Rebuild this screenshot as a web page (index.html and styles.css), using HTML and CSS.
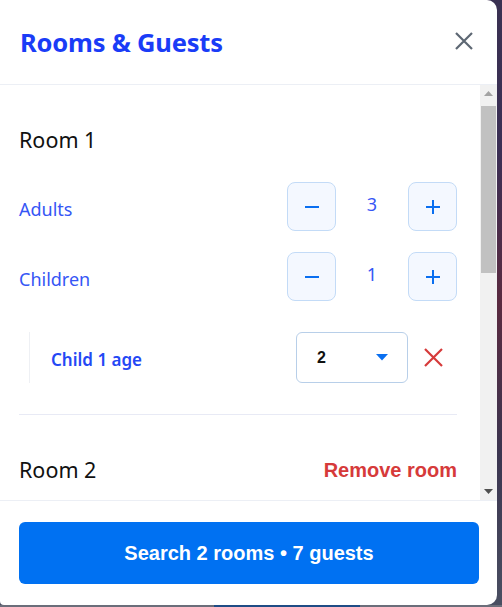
FILE: index.html
```html
<!DOCTYPE html>
<html lang="en">
<head>
<meta charset="utf-8">
<title>Rooms &amp; Guests</title>
<link rel="stylesheet" href="styles.css">
</head>
<body>
<div class="backdrop">
  <div class="modal">
    <header class="modal-header">
      <h1 class="modal-title">Rooms &amp; Guests</h1>
      <button class="close-btn" aria-label="Close">
        <svg width="18" height="18" viewBox="0 0 18 18"><path d="M1 1L17 17M17 1L1 17" stroke="#5d6773" stroke-width="2.2"/></svg>
      </button>
    </header>
    <div class="modal-body">
      <div class="scroll-content">
        <section class="room">
          <div class="room-head"><h2 class="room-title">Room 1</h2></div>
          <div class="row">
            <span class="row-label">Adults</span>
            <div class="stepper">
              <button class="step-btn" aria-label="Decrease"><svg width="16" height="16" viewBox="0 0 16 16"><path d="M1 8H15" stroke="#0a6ff0" stroke-width="2"/></svg></button>
              <span class="step-value">3</span>
              <button class="step-btn" aria-label="Increase"><svg width="16" height="16" viewBox="0 0 16 16"><path d="M1 8H15M8 1V15" stroke="#0a6ff0" stroke-width="2"/></svg></button>
            </div>
          </div>
          <div class="row">
            <span class="row-label">Children</span>
            <div class="stepper">
              <button class="step-btn" aria-label="Decrease"><svg width="16" height="16" viewBox="0 0 16 16"><path d="M1 8H15" stroke="#0a6ff0" stroke-width="2"/></svg></button>
              <span class="step-value">1</span>
              <button class="step-btn" aria-label="Increase"><svg width="16" height="16" viewBox="0 0 16 16"><path d="M1 8H15M8 1V15" stroke="#0a6ff0" stroke-width="2"/></svg></button>
            </div>
          </div>
          <div class="child-row">
            <span class="child-label">Child 1 age</span>
            <div class="age-select">
              <span class="age-value">2</span>
              <svg class="caret" width="12" height="7" viewBox="0 0 12 7"><path d="M0 0H12L6 6.5Z" fill="#0a6ff0"/></svg>
            </div>
            <button class="remove-child" aria-label="Remove child">
              <svg width="19" height="19" viewBox="0 0 19 19"><path d="M1 1L18 18M18 1L1 18" stroke="#d63a3a" stroke-width="2.2"/></svg>
            </button>
          </div>
        </section>
        <section class="room room-last">
          <div class="room-head">
            <h2 class="room-title">Room 2</h2>
            <button class="remove-room">Remove room</button>
          </div>
        </section>
      </div>
      <div class="scrollbar" aria-hidden="true">
        <div class="sb-arrow">
          <svg width="9" height="5" viewBox="0 0 9 5"><path d="M0 5H9L4.5 0Z" fill="#a3a3a3"/></svg>
        </div>
        <div class="sb-track">
          <div class="sb-thumb"></div>
        </div>
        <div class="sb-arrow">
          <svg width="9" height="5" viewBox="0 0 9 5"><path d="M0 0H9L4.5 5Z" fill="#505050"/></svg>
        </div>
      </div>
    </div>
    <footer class="modal-footer">
      <button class="search-btn">Search 2 rooms • 7 guests</button>
    </footer>
  </div>
</div>
</body>
</html>
```
FILE: styles.css
```css
* { box-sizing: border-box; }
html, body { margin: 0; padding: 0; height: 100%; }
body {
  background:
    linear-gradient(to right, #6b6e7a 214px, #1f4c85 214px, #1f4c85 360px, #6b6e7a 360px) left bottom / 100% 2px no-repeat,
    linear-gradient(180deg, #3a3152 0%, #3b2f55 25%, #5a2a40 50%, #3b3550 75%, #4a4f62 100%);
  font-family: "Noto Sans", "Open Sans", sans-serif;
  overflow: hidden;
}
button { font: inherit; cursor: pointer; }
.backdrop { width: 502px; height: 607px; }
.modal {
  width: 497px;
  height: 605px;
  background: #fff;
  border-radius: 0 10px 10px 4px;
  display: flex;
  flex-direction: column;
  overflow: hidden;
}
.modal-header {
  height: 85px;
  flex: none;
  display: flex;
  align-items: center;
  justify-content: space-between;
  padding: 0 21px 0 20px;
  border-bottom: 1px solid #eceff5;
}
.modal-title {
  margin: 0;
  font-size: 25.5px;
  font-weight: 700;
  color: #1a3cf7;
  letter-spacing: -0.2px;
}
.close-btn {
  width: 24px; height: 24px;
  border: 0; background: none; padding: 0;
  display: flex; align-items: center; justify-content: center;
  margin-top: -3px;
}
.modal-body {
  flex: 1;
  min-height: 0;
  display: flex;
}
.scroll-content {
  flex: 1;
  overflow: hidden;
  padding: 0 23px 0 19px;
}
.scrollbar {
  width: 17px;
  flex: none;
  background: #f1f1f1;
  display: flex;
  flex-direction: column;
}
.sb-arrow {
  height: 17px;
  display: flex;
  align-items: center;
  justify-content: center;
}
.sb-track { flex: 1; padding-top: 4px; }
.sb-thumb {
  height: 167px;
  margin: 0 1px;
  background: #c1c1c1;
}
.room {
  padding: 40px 0 31px;
  border-bottom: 1px solid #e8eaf5;
}
.room-last { border-bottom: 0; padding-bottom: 0; }
.room-head {
  height: 30px;
  display: flex;
  align-items: center;
  justify-content: space-between;
  margin-bottom: 27px;
}
.room-title {
  margin: 0;
  font-size: 21.5px;
  font-weight: 400;
  color: #111;
  padding-bottom: 1px;
}
.remove-room {
  border: 0; background: none; padding: 0;
  font-family: "Liberation Sans", Arial, sans-serif;
  font-weight: 700;
  font-size: 20px;
  color: #d63a3a;
}
.row {
  display: flex;
  align-items: center;
  justify-content: space-between;
  height: 49px;
  margin-bottom: 21px;
}
.row-label {
  font-size: 18px;
  color: #3656f5;
  padding-top: 4px;
}
.stepper { display: flex; align-items: center; }
.step-btn {
  width: 49px; height: 49px;
  border: 1.5px solid #c3dbf7;
  border-radius: 8px;
  background: #f4f8ff;
  display: flex; align-items: center; justify-content: center;
  padding: 0;
}
.step-value {
  width: 72px;
  text-align: center;
  font-size: 18px;
  color: #3656f5;
  margin-top: -6px;
}
.child-row {
  display: flex;
  align-items: center;
  height: 51px;
  margin: 31px 0 0 10px;
  padding-left: 21px;
  border-left: 1px solid #eef0f4;
}
.child-label {
  flex: 1;
  font-size: 17px;
  font-weight: 600;
  color: #2448f5;
  padding-top: 3px;
}
.age-select {
  width: 112px; height: 51px;
  border: 1px solid #b8cfe9;
  border-radius: 6px;
  display: flex; align-items: center; justify-content: space-between;
  padding: 0 19px 0 20px;
}
.age-value {
  font-family: "Liberation Sans", Arial, sans-serif;
  font-weight: 700;
  font-size: 16px;
  color: #111;
}
.remove-child {
  width: 36px; height: 36px;
  margin: 0 6px 0 7px;
  border: 0; background: none; padding: 0;
  display: flex; align-items: center; justify-content: center;
}
.modal-footer {
  flex: none;
  border-top: 1px solid #eceff5;
  padding: 21px 18px 21px 19px;
}
.search-btn {
  width: 460px;
  height: 62px;
  border: 0;
  border-radius: 6px;
  background: #0071f2;
  color: #fff;
  font-family: "Liberation Sans", Arial, sans-serif;
  font-weight: 700;
  font-size: 20px;
}
```
